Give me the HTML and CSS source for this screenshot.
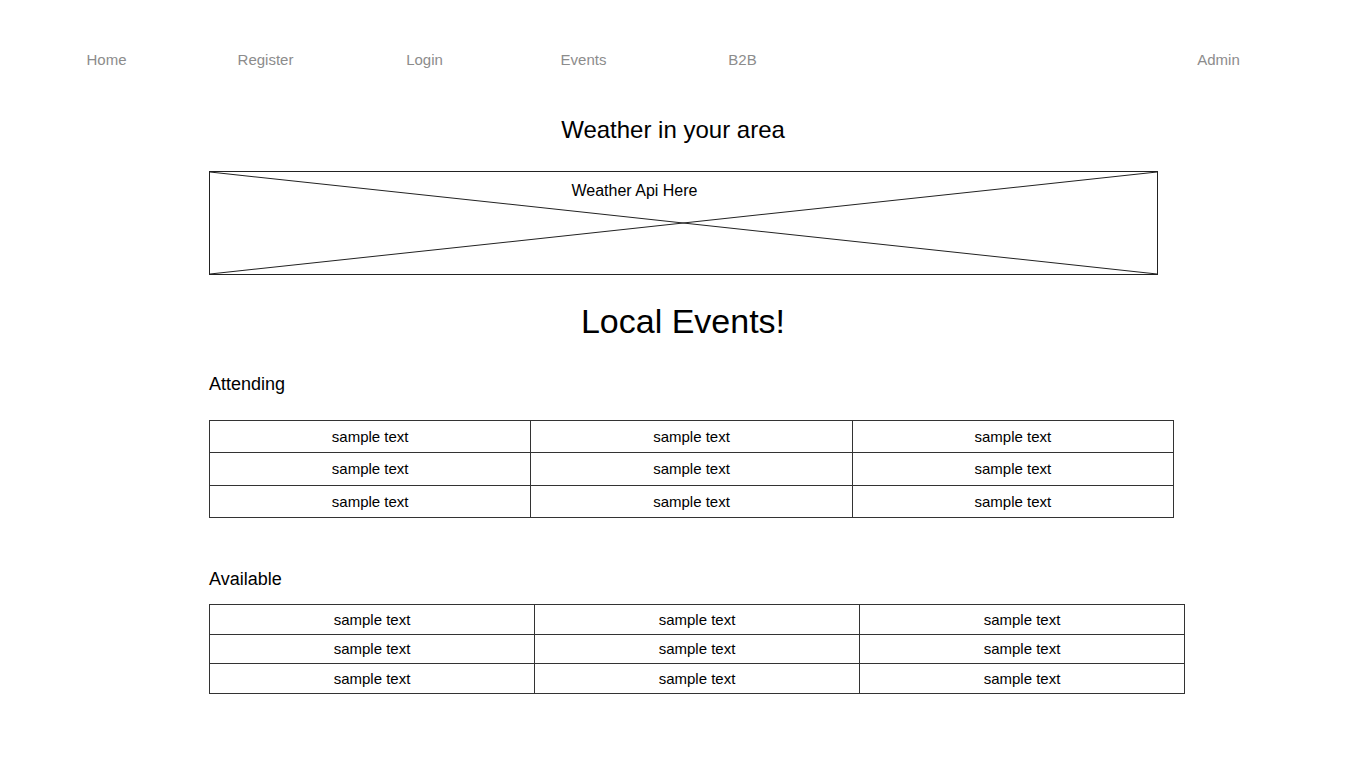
FILE: index.html
```html
<!DOCTYPE html>
<html lang="en">
<head>
<meta charset="utf-8">
<title>Local Events</title>
<link rel="stylesheet" href="styles.css">
</head>
<body>
<nav class="nav">
  <a class="nav-link">Home</a>
  <a class="nav-link">Register</a>
  <a class="nav-link">Login</a>
  <a class="nav-link">Events</a>
  <a class="nav-link">B2B</a>
  <span></span>
  <span></span>
  <a class="nav-link nav-admin">Admin</a>
</nav>

<main class="main">
  <h2 class="weather-title">Weather in your area</h2>
  <div class="placeholder">
    <svg class="placeholder-x" viewBox="0 0 100 100" preserveAspectRatio="none">
      <line x1="0" y1="0" x2="100" y2="100" vector-effect="non-scaling-stroke"/>
      <line x1="0" y1="100" x2="100" y2="0" vector-effect="non-scaling-stroke"/>
    </svg>
    <span class="placeholder-label">Weather Api Here</span>
  </div>

  <h1 class="events-title">Local Events!</h1>

  <h3 class="section-title attending-title">Attending</h3>
  <table class="grid grid-attending">
    <tr><td>sample text</td><td>sample text</td><td>sample text</td></tr>
    <tr><td>sample text</td><td>sample text</td><td>sample text</td></tr>
    <tr><td>sample text</td><td>sample text</td><td>sample text</td></tr>
  </table>

  <h3 class="section-title available-title">Available</h3>
  <table class="grid grid-available">
    <tr><td>sample text</td><td>sample text</td><td>sample text</td></tr>
    <tr><td>sample text</td><td>sample text</td><td>sample text</td></tr>
    <tr><td>sample text</td><td>sample text</td><td>sample text</td></tr>
  </table>
</main>
</body>
</html>
```

FILE: styles.css
```css
* { box-sizing: border-box; }

html, body {
  margin: 0;
  padding: 0;
  background: #ffffff;
  color: #000000;
  font-family: "Liberation Sans", Arial, sans-serif;
}

.nav {
  display: grid;
  grid-template-columns: repeat(8, 159px);
  padding: 51px 0 0 27px;
  height: 69px;
}

.nav-link {
  text-align: center;
  font-size: 15px;
  line-height: 18px;
  color: #8c8c8c;
}

.nav-admin {
  padding-right: 2px;
}

.main {
  padding-left: 209px;
}

.weather-title {
  margin: 47px 0 0 0;
  width: 928px;
  text-align: center;
  font-size: 24px;
  line-height: 28px;
  font-weight: normal;
}

.placeholder {
  position: relative;
  margin-top: 27px;
  width: 949px;
  height: 104px;
  border: 1px solid #222;
  display: flex;
  justify-content: center;
  padding-top: 10px;
  padding-right: 98px;
}

.placeholder-x {
  position: absolute;
  inset: 0;
  width: 100%;
  height: 100%;
}

.placeholder-x line {
  stroke: #222;
  stroke-width: 1;
}

.placeholder-label {
  position: relative;
  font-size: 16px;
  line-height: 18px;
  height: 18px;
}

.events-title {
  margin: 26px 0 0 0;
  width: 948px;
  text-align: center;
  font-size: 34px;
  line-height: 40px;
  font-weight: normal;
}

.section-title {
  margin: 0;
  font-size: 18px;
  line-height: 21px;
  font-weight: normal;
}

.attending-title { margin-top: 33px; }
.available-title { margin-top: 51px; }

.grid {
  border-collapse: collapse;
  table-layout: fixed;
}

.grid td {
  border: 1px solid #333;
  text-align: center;
  font-size: 15px;
  padding: 0;
}

.grid-attending {
  margin-top: 25px;
  width: 965px;
}

.grid-attending td { height: 32.3px; }

.grid-available {
  margin-top: 14px;
  width: 976px;
}

.grid-available td { height: 29.7px; }
```
